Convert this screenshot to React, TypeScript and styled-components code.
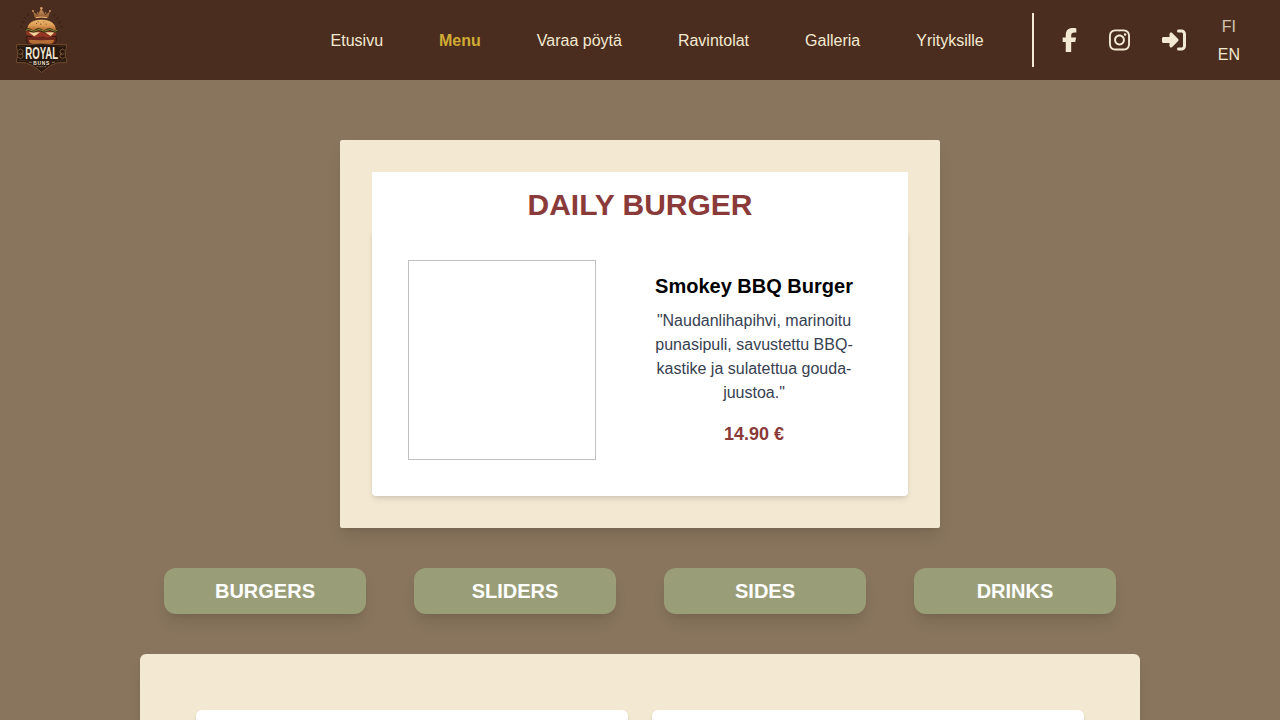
import React from 'react';
import styled, { createGlobalStyle } from 'styled-components';
import { FaInstagram, FaRightToBracket } from 'react-icons/fa6';

const GlobalStyle = createGlobalStyle`
  *, *::before, *::after { box-sizing: border-box; }
  body { margin: 0; background: #89755d; }
  h1, h2, p { margin: 0; }
`;

const shadowLg = '0 10px 15px -3px rgba(0, 0, 0, 0.1), 0 4px 6px -4px rgba(0, 0, 0, 0.1)';
const shadowMd = '0 4px 6px -1px rgba(0, 0, 0, 0.1), 0 2px 4px -2px rgba(0, 0, 0, 0.1)';

const Page = styled.div`
  height: 100vh;
  overflow: hidden;
  background: #89755d;
  font-family: 'Liberation Sans', Arial, sans-serif;
  font-size: 16px;
  line-height: 24px;
`;

const Header = styled.header`
  display: flex;
  align-items: center;
  justify-content: space-between;
  height: 80px;
  padding: 0 40px 0 15px;
  background: #4b2d1f;
  color: #f3e9d2;
`;

const LogoSvg = styled.svg`
  display: block;
  width: 54px;
  height: 68px;
`;

const HeaderEnd = styled.div`
  display: flex;
  align-items: center;
`;

const Nav = styled.nav`
  display: flex;
  gap: 56px;
  padding: 2px 48px 0 0;
`;

const NavLink = styled.a<{ $active?: boolean }>`
  color: ${({ $active }) => ($active ? '#d0ab35' : 'inherit')};
  font-weight: ${({ $active }) => ($active ? 700 : 400)};
  cursor: pointer;
`;

const Tools = styled.div`
  display: flex;
  align-items: center;
  gap: 32px;
`;

const Divider = styled.div`
  width: 2px;
  height: 54px;
  margin-right: 28px;
  background: #f3e9d2;
`;

const IconLink = styled.a<{ $width: number }>`
  display: flex;
  width: ${({ $width }) => $width}px;
  height: 24px;

  svg {
    width: 100%;
    height: 100%;
  }
`;

const Languages = styled.div`
  display: flex;
  flex-direction: column;
  align-items: center;
  gap: 4px;
  padding-top: 2px;
`;

const Language = styled.span<{ $dim?: boolean }>`
  opacity: ${({ $dim }) => ($dim ? 0.8 : 1)};
`;

const Main = styled.main`
  display: flex;
  flex-direction: column;
  align-items: center;
  gap: 40px;
  padding-top: 60px;
`;

const DailyPanel = styled.section`
  width: 600px;
  padding: 32px;
  border-radius: 2px;
  background: #f3e8d2;
  box-shadow: ${shadowLg};
`;

const DailyTitle = styled.h1`
  padding: 15px 0 5px;
  background: #fff;
  color: #8b3a3a;
  font-size: 30px;
  line-height: 36px;
  text-align: center;
`;

const DailyCard = styled.div`
  display: flex;
  align-items: center;
  gap: 40px;
  padding: 32px 36px 36px;
  border-radius: 0 0 4px 4px;
  background: #fff;
  box-shadow: ${shadowMd};
`;

const Photo = styled.div`
  width: 188px;
  height: 200px;
  border: 1px solid #c0c0c0;
`;

const Details = styled.div`
  flex: 1;
  text-align: center;
`;

const BurgerName = styled.h2`
  color: #000;
  font-size: 20px;
  line-height: 28px;
`;

const Description = styled.p`
  margin: 9px 0 15px;
  color: #374151;
`;

const Price = styled.p`
  color: #8b3a3a;
  font-size: 18px;
  font-weight: 700;
  line-height: 28px;
`;

const Categories = styled.div`
  display: flex;
  gap: 48px;
`;

const CategoryButton = styled.button`
  width: 202px;
  height: 46px;
  padding: 0;
  border: 0;
  border-radius: 12px;
  background: #9a9e78;
  box-shadow: ${shadowLg};
  color: #fff;
  font: 700 20px/28px 'Liberation Sans', Arial, sans-serif;
`;

const MenuPanel = styled.section`
  display: grid;
  grid-template-columns: 1fr 1fr;
  gap: 24px;
  width: 1000px;
  padding: 56px;
  border-radius: 6px;
  background: #f3e8d2;
  box-shadow: ${shadowLg};
`;

const MenuCard = styled.div`
  height: 240px;
  border-radius: 6px;
  background: #fff;
  box-shadow: ${shadowMd};
`;

const navItems = ['Etusivu', 'Menu', 'Varaa pöytä', 'Ravintolat', 'Galleria', 'Yrityksille'];
const categories = ['BURGERS', 'SLIDERS', 'SIDES', 'DRINKS'];

function Logo() {
  return (
    <LogoSvg viewBox="45 18 162 204" role="img" aria-label="Royal Buns">
      <defs>
        <linearGradient id="bun" x1="0" y1="0" x2="0" y2="1">
          <stop offset="0" stopColor="#eebc72" />
          <stop offset="0.55" stopColor="#dc9a52" />
          <stop offset="1" stopColor="#a5602c" />
        </linearGradient>
        <linearGradient id="crown" x1="0" y1="0" x2="0" y2="1">
          <stop offset="0" stopColor="#d29a62" />
          <stop offset="1" stopColor="#875129" />
        </linearGradient>
      </defs>
      <path
        d="M68 82l-8-4M73 70l-8-6M79 58l-7-7M87 49l-5-8M180 82l8-4M175 70l8-6M169 58l7-7M161 49l5-8"
        stroke="#24160f"
        strokeWidth="2"
      />
      <path d="M104 56L99 34l13 10 12-19 12 19 14-10-5 22q-20-5-41 0z" fill="url(#crown)" stroke="#3a2014" strokeWidth="1" />
      <path d="M108 53q16-4 33 0" fill="none" stroke="#edbb7a" strokeWidth="3" />
      <g fill="#d39a65">
        <circle cx="99" cy="33" r="3" />
        <circle cx="112" cy="39" r="2" />
        <circle cx="124" cy="25" r="4" />
        <circle cx="137" cy="39" r="2" />
        <circle cx="150" cy="33" r="3" />
      </g>
      <path d="M80 92C80 69 98 58 124 58s45 11 45 34z" fill="url(#bun)" stroke="#3b2013" strokeWidth="2" />
      <path d="M113 65l3 1M130 66l3-1M120 72l4 1M108 71l3-1M137 72l3 1" stroke="#6d4020" strokeWidth="2.5" />
      <path d="M80 110h89v14q-2 10-13 11H93q-12-1-13-11z" fill="#60261b" stroke="#26130d" strokeWidth="2" />
      <path d="M79 94h91l-3 12-12 3-10 7-13-6-11 1-16 2-12-6-14-3z" fill="#923522" />
      <path d="M86 97h34l-17 12zM135 97h29l-12 11z" fill="#f0d49b" />
      <path d="M76 91q8-6 16 0t16 0 16 0 16 0 16 0 16 0" fill="none" stroke="#292711" strokeWidth="7" />
      <path d="M77 91q8-5 16 0t16 0 16 0 16 0 16 0 15 0" fill="none" stroke="#9a8b36" strokeWidth="3" />
      <path d="M86 119h77q-3 13-17 13h-43q-15 0-17-13z" fill="#b76d36" />
      <path d="M82 114q42 6 84 0" fill="none" stroke="#6b281e" strokeWidth="7" />
      <path
        d="M50 134h34q40-6 81 0h34v11l-3 6v20l3 6v11h-26l-22 9-26 20-27-20-22-9H50v-11l3-6v-20l-3-6z"
        fill="#26170f"
        stroke="#7d5433"
        strokeWidth="2.5"
      />
      <path d="M56 139h20M174 139h20M56 182h23l24 8 22 17 22-17 24-8h23" fill="none" stroke="#5c3a23" strokeWidth="1.5" />
      <path
        d="M55 151l7-4 7 5v7l-7 5-6-4M55 172l7 4 7-5v-6l-7-6M194 151l-7-4-7 5v7l7 5 6-4M194 172l-7 4-7-5v-6l7-6"
        fill="none"
        stroke="#94663e"
        strokeWidth="2.4"
      />
      <g fill="#f0e6d2" fontFamily="'Liberation Sans', Arial, sans-serif" fontWeight="700" textAnchor="middle">
        <text transform="translate(125 177) scale(0.58 1)" fontSize="50">ROYAL</text>
        <text transform="translate(125 194) scale(0.85 1)" fontSize="17" letterSpacing="3">BUNS</text>
      </g>
      <path d="M87 187h8M156 187h8" stroke="#b9a488" strokeWidth="2" />
      <path d="M109 200h6M118 200h12M133 200h6" stroke="#8d6f56" strokeWidth="2.5" />
    </LogoSvg>
  );
}

function FacebookIcon() {
  return (
    <svg viewBox="0 0 320 512" fill="currentColor" aria-hidden="true">
      <path d="M80 299.3V512H196V299.3h86.5l18-97.8H196V166.9c0-51.7 20.3-71.5 72.7-71.5c16.3 0 29.4 .4 37 1.2V7.9C291.4 4 256.4 0 236.2 0C129.3 0 80 50.5 80 159.4v42.1H14v97.8H80z" />
    </svg>
  );
}

export default function App() {
  return (
    <Page>
      <GlobalStyle />
      <Header>
        <Logo />
        <HeaderEnd>
          <Nav>
            {navItems.map((item) => (
              <NavLink key={item} $active={item === 'Menu'}>{item}</NavLink>
            ))}
          </Nav>
          <Divider />
          <Tools>
            <IconLink $width={15}><FacebookIcon /></IconLink>
            <IconLink $width={21}><FaInstagram /></IconLink>
            <IconLink $width={24}><FaRightToBracket /></IconLink>
            <Languages>
              <Language $dim>FI</Language>
              <Language>EN</Language>
            </Languages>
          </Tools>
        </HeaderEnd>
      </Header>
      <Main>
        <DailyPanel>
          <DailyTitle>DAILY BURGER</DailyTitle>
          <DailyCard>
            <Photo />
            <Details>
              <BurgerName>Smokey BBQ Burger</BurgerName>
              <Description>
                "Naudanlihapihvi, marinoitu punasipuli, savustettu BBQ-kastike ja sulatettua gouda-juustoa."
              </Description>
              <Price>14.90 €</Price>
            </Details>
          </DailyCard>
        </DailyPanel>
        <Categories>
          {categories.map((name) => (
            <CategoryButton key={name}>{name}</CategoryButton>
          ))}
        </Categories>
        <MenuPanel>
          <MenuCard />
          <MenuCard />
        </MenuPanel>
      </Main>
    </Page>
  );
}
